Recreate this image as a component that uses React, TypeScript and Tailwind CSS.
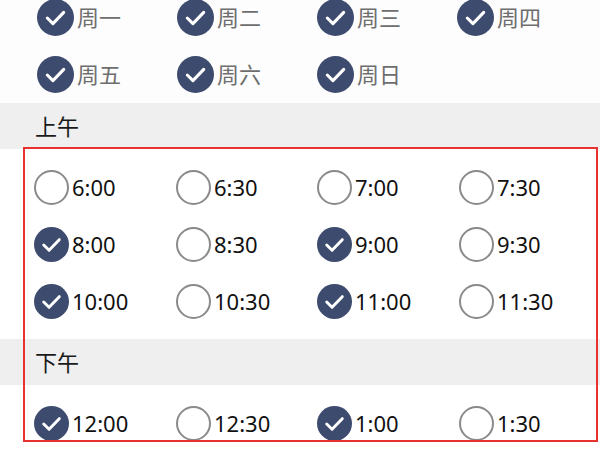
import React from 'react';

const weekdays = ['周一', '周二', '周三', '周四', '周五', '周六', '周日'];

const morning = [
    { t: '6:00', on: false },
    { t: '6:30', on: false },
    { t: '7:00', on: false },
    { t: '7:30', on: false },
    { t: '8:00', on: true },
    { t: '8:30', on: false },
    { t: '9:00', on: true },
    { t: '9:30', on: false },
    { t: '10:00', on: true },
    { t: '10:30', on: false },
    { t: '11:00', on: true },
    { t: '11:30', on: false },
];

const afternoon = [
    { t: '12:00', on: true },
    { t: '12:30', on: false },
    { t: '1:00', on: true },
    { t: '1:30', on: false },
];

function Check({ on, size }: { on: boolean; size: number }) {
    if (!on) {
        return <div className="shrink-0 rounded-full border-2 border-[#8a8a8a] bg-white" style={{ width: size, height: size }} />;
    }
    return (
        <svg width={size} height={size} viewBox="0 0 36 36" className="shrink-0">
            <circle cx="18" cy="18" r="18" fill="#3d4b6e" />
            <polyline points="10,18.5 15.5,24 26,13" fill="none" stroke="#fff" strokeWidth="3" strokeLinecap="round" strokeLinejoin="round" />
        </svg>
    );
}

function Band({ label }: { label: string }) {
    return (
        <div className="h-[46px] bg-[#efefef] flex items-center pl-[35px] text-[22px] text-[#1a1a1a]">
            {label}
        </div>
    );
}

export default function App() {
    return (
        <div className="relative w-[600px] h-[449px] overflow-hidden bg-white" style={{ fontFamily: '"Noto Sans", "Noto Sans CJK SC", sans-serif' }}>
            <div className="-mt-[11px]">
                <div className="grid grid-cols-[140px_140px_140px_140px] pl-[37px] bg-[#fdfdfd]">
                    {weekdays.map((d) => (
                        <div key={d} className="h-[57px] flex items-center gap-[3px]">
                            <Check on={true} size={37} />
                            <span className="text-[22px] text-[#6e6e6e]">{d}</span>
                        </div>
                    ))}
                </div>

                <Band label="上午" />
                <div className="grid grid-cols-[142px_141px_142px_141px] pl-[34px] pt-[10px] pb-[9px]">
                    {morning.map((s) => (
                        <div key={s.t} className="h-[57px] flex items-center gap-[3px]">
                            <Check on={s.on} size={35} />
                            <span className="text-[22px] text-[#111]">{s.t}</span>
                        </div>
                    ))}
                </div>

                <Band label="下午" />
                <div className="grid grid-cols-[142px_141px_142px_141px] pl-[34px] pt-[10px]">
                    {afternoon.map((s) => (
                        <div key={s.t} className="h-[57px] flex items-center gap-[3px]">
                            <Check on={s.on} size={35} />
                            <span className="text-[22px] text-[#111]">{s.t}</span>
                        </div>
                    ))}
                </div>
            </div>

            <div className="absolute left-[23px] top-[147px] w-[575px] h-[295px] border-2 border-[#e8322f] pointer-events-none" />
        </div>
    );
}
